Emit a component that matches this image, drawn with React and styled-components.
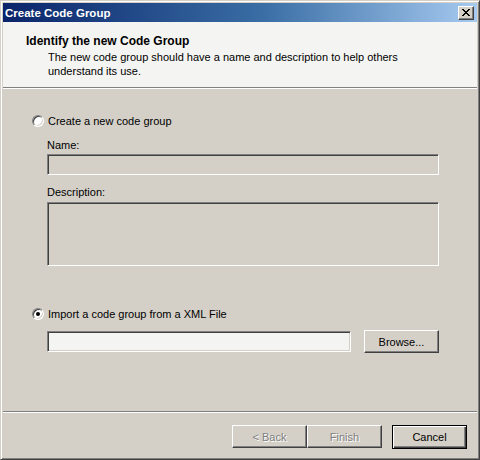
import React from "react";
import styled, { createGlobalStyle } from "styled-components";

const GlobalStyle = createGlobalStyle`
  html, body {
    margin: 0;
    padding: 0;
    background: #d4d0c8;
  }
  body {
    font-family: "Liberation Sans", Arial, sans-serif;
    font-size: 11px;
    color: #000;
  }
`;

const Window = styled.div`
  box-sizing: border-box;
  width: 480px;
  height: 460px;
  display: flex;
  flex-direction: column;
  background: #d4d0c8;
  border: 1px solid;
  border-color: #d4d0c8 #404040 #404040 #d4d0c8;
  box-shadow: inset 1px 1px #ffffff, inset -1px -1px #808080;
  padding: 2px;
`;

const TitleBar = styled.div`
  height: 19px;
  flex: none;
  display: flex;
  align-items: center;
  justify-content: space-between;
  padding: 0 3px 0 2px;
  background: linear-gradient(to right, #0a246a 0%, #3a6ea5 55%, #a6caf0 100%);
`;

const TitleText = styled.span`
  color: #fff;
  font-weight: bold;
  font-size: 11.5px;
`;

const CloseButton = styled.button`
  box-sizing: border-box;
  width: 16px;
  height: 14px;
  padding: 0;
  display: flex;
  align-items: center;
  justify-content: center;
  background: #d4d0c8;
  border: 1px solid;
  border-color: #ffffff #404040 #404040 #ffffff;
  box-shadow: inset -1px -1px #808080;
`;

const Header = styled.div`
  height: 65px;
  flex: none;
  box-sizing: border-box;
  padding: 12px 0 0 23px;
  background: #f4f4f2;
`;

const HeaderTitle = styled.div`
  font-weight: bold;
  font-size: 12px;
  line-height: 14px;
`;

const HeaderText = styled.div`
  margin: 2px 0 0 22px;
  line-height: 14px;
  width: 380px;
`;

const Divider = styled.div`
  height: 1px;
  flex: none;
  background: #808080;
  border-bottom: 1px solid #ffffff;
`;

const Body = styled.div`
  flex: 1;
  display: flex;
  flex-direction: column;
  padding: 25px 0 0 29px;
`;

const RadioRow = styled.label`
  display: flex;
  align-items: center;
  gap: 4px;
  height: 14px;
  margin-top: ${(p) => p.$top || 0}px;
`;

const Radio = styled.span`
  box-sizing: border-box;
  position: relative;
  width: 12px;
  height: 12px;
  border-radius: 50%;
  border: 1px solid;
  border-color: #808080 #ffffff #ffffff #808080;
  box-shadow: inset 1px 1px #404040, inset -1px -1px #d4d0c8;
  background: #ffffff;

  &::after {
    content: "";
    display: ${(p) => (p.$checked ? "block" : "none")};
    position: absolute;
    left: 3px;
    top: 3px;
    width: 4px;
    height: 4px;
    border-radius: 50%;
    background: #000;
  }
`;

const Indented = styled.div`
  display: flex;
  flex-direction: column;
  margin-left: 15px;
`;

const FieldLabel = styled.div`
  line-height: 14px;
  margin-top: ${(p) => p.$top || 0}px;
`;

const Field = styled.div`
  box-sizing: border-box;
  width: ${(p) => p.$width || 392}px;
  height: ${(p) => p.$height || 21}px;
  margin-top: ${(p) => p.$top || 0}px;
  border: 1px solid;
  border-color: #808080 #ffffff #ffffff #808080;
  box-shadow: inset 1px 1px #404040, inset -1px -1px #d4d0c8;
  background: ${(p) => (p.$disabled ? "#d4d0c8" : "#f4f4f2")};
`;

const FileRow = styled.div`
  display: flex;
  align-items: center;
  gap: 13px;
  margin-top: 9px;
`;

const Button = styled.button`
  box-sizing: border-box;
  width: 75px;
  height: ${(p) => (p.$default ? 24 : 23)}px;
  padding: 0;
  font-family: "Liberation Sans", Arial, sans-serif;
  font-size: 11px;
  color: ${(p) => (p.disabled ? "#808080" : "#000")};
  text-shadow: ${(p) => (p.disabled ? "1px 1px #ffffff" : "none")};
  background: #d4d0c8;
  border: 1px solid;
  border-color: ${(p) =>
    p.$default ? "#000" : "#ffffff #404040 #404040 #ffffff"};
  box-shadow: ${(p) =>
    p.$default
      ? "inset 1px 1px #ffffff, inset -1px -1px #404040, inset -2px -2px #808080"
      : "inset -1px -1px #808080"};
`;

const Footer = styled.div`
  height: 44px;
  flex: none;
  box-sizing: border-box;
  display: flex;
  justify-content: flex-end;
  align-items: flex-start;
  padding: 12px 10px 0 0;
`;

const ButtonPair = styled.div`
  display: flex;
  margin-right: 10px;
`;

const App = () => {
  return (
    <>
      <GlobalStyle />
      <Window>
        <TitleBar>
          <TitleText>Create Code Group</TitleText>
          <CloseButton aria-label="Close">
            <svg width="8" height="7" viewBox="0 0 8 7">
              <path
                d="M0 0h2v1h1v1h2V1h1V0h2v1H7v1H6v1H5v1h1v1h1v1h1v1H6V6H5V5H3v1H2v1H0V6h1V5h1V4h1V3H2V2H1V1H0z"
                fill="#000"
              />
            </svg>
          </CloseButton>
        </TitleBar>

        <Header>
          <HeaderTitle>Identify the new Code Group</HeaderTitle>
          <HeaderText>
            The new code group should have a name and description to help others
            <br />
            understand its use.
          </HeaderText>
        </Header>
        <Divider />

        <Body>
          <RadioRow>
            <Radio />
            Create a new code group
          </RadioRow>
          <Indented>
            <FieldLabel $top={10}>Name:</FieldLabel>
            <Field $disabled $top={2} />
            <FieldLabel $top={10}>Description:</FieldLabel>
            <Field $disabled $top={3} $height={64} />
          </Indented>

          <RadioRow $top={41}>
            <Radio $checked />
            Import a code group from a XML File
          </RadioRow>
          <Indented>
            <FileRow>
              <Field $width={304} />
              <Button>Browse...</Button>
            </FileRow>
          </Indented>
        </Body>

        <Divider />
        <Footer>
          <ButtonPair>
            <Button disabled>&lt; Back</Button>
            <Button disabled>Finish</Button>
          </ButtonPair>
          <Button $default>Cancel</Button>
        </Footer>
      </Window>
    </>
  );
};

export default App;
